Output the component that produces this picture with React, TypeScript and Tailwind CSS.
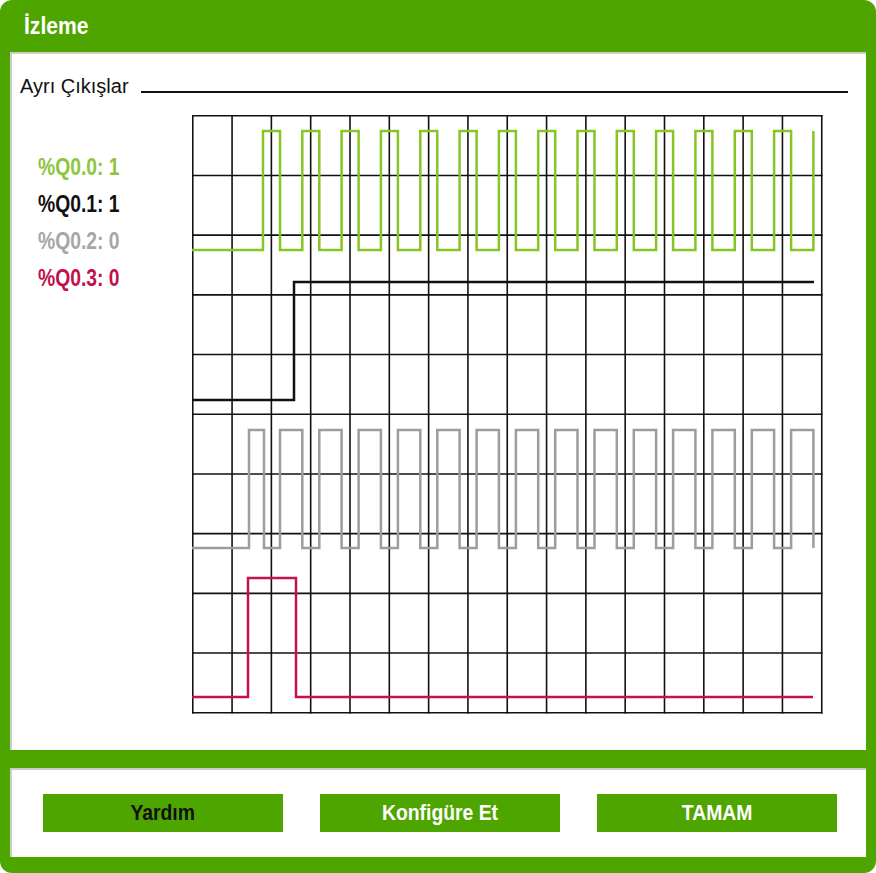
import React from 'react';

const COL = 629 / 16;
const ROW = 597 / 10;

// green pulse train, gray is roughly its inverse
function greenPath() {
  let d = 'M0 135 H71';
  for (let k = 0; k < 14; k++) {
    const r = 71 + k * COL;
    d += ` V16 H${(r + 17).toFixed(1)} V135 H${(71 + (k + 1) * COL).toFixed(1)}`;
  }
  d += ' V16';
  return d;
}

function grayPath() {
  let d = 'M0 433 H57 V315 H72 V433';
  for (let k = 0; k < 14; k++) {
    const f = 71 + k * COL + 17;
    const nextRise = 71 + (k + 1) * COL;
    d += ` H${f.toFixed(1)} V315 H${nextRise.toFixed(1)} V433`;
  }
  return d;
}

function Chart() {
  const vlines = Array.from({ length: 17 }, (_, i) => i * COL + 0.75);
  const hlines = Array.from({ length: 11 }, (_, i) => i * ROW + 0.75);
  return (
    <svg width="631" height="599" viewBox="0 0 631 599" className="block shrink-0">
      {vlines.map((x, i) => (
        <line key={'v' + i} x1={x} y1={0} x2={x} y2={598.5} stroke="#111" strokeWidth="1.6" />
      ))}
      {hlines.map((y, i) => (
        <line key={'h' + i} x1={0} y1={y} x2={630.5} y2={y} stroke="#111" strokeWidth="1.6" />
      ))}
      <path d={greenPath()} fill="none" stroke="#86c524" strokeWidth="2.5" />
      <path d="M0 285 H102 V167 H622" fill="none" stroke="#111" strokeWidth="2.5" />
      <path d={grayPath()} fill="none" stroke="#9c9ca2" strokeWidth="2.5" />
      <path d="M0 582 H56 V463 H104 V582 H621" fill="none" stroke="#c4114f" strokeWidth="2.5" />
    </svg>
  );
}

export default function App() {
  const labels = [
    { text: '%Q0.0: 1', color: 'text-[#8cc63f]' },
    { text: '%Q0.1: 1', color: 'text-[#111]' },
    { text: '%Q0.2: 0', color: 'text-[#a6a6a8]' },
    { text: '%Q0.3: 0', color: 'text-[#c1114e]' },
  ];
  return (
    <div className="w-[876px] h-[873px] bg-[#4fa500] rounded-[12px] flex flex-col px-[10px] font-['Liberation_Sans',Arial,sans-serif]">
      <div className="h-[52px] flex items-center pl-[14px] text-white font-bold text-[24px]">
        <span className="inline-block scale-x-[0.88] origin-left">İzleme</span>
      </div>
      <div className="h-[698px] bg-white border-t-2 border-l-2 border-[#c9cfc4] flex flex-col">
        <div className="flex items-end h-[45px] pl-[8px] pr-[18px]">
          <span className="text-[20px] leading-none text-[#111] pb-[3px]">Ayrı Çıkışlar</span>
          <div className="flex-1 ml-[12px] h-[2px] bg-[#111] mb-[6px]" />
        </div>
        <div className="flex mt-[16px]">
          <div className="w-[180px] pl-[26px] pt-[40px] flex flex-col gap-[13px] font-bold text-[23px] leading-[24px]">
            {labels.map(l => (
              <div key={l.text} className={l.color}>
                <span className="inline-block scale-x-[0.84] origin-left">{l.text}</span>
              </div>
            ))}
          </div>
          <Chart />
        </div>
      </div>
      <div className="h-[18px]" />
      <div className="h-[89px] bg-white border-t-2 border-l-2 border-[#c9cfc4] flex items-center pl-[31px] pb-[2px] gap-[37px]">
        {[
          { t: 'Yardım', c: 'text-[#111]' },
          { t: 'Konfigüre Et', c: 'text-white' },
          { t: 'TAMAM', c: 'text-white' },
        ].map(b => (
          <div
            key={b.t}
            className={`w-[240px] h-[38px] bg-[#4fa500] flex items-center justify-center font-bold text-[22px] ${b.c}`}
          >
            <span className="inline-block scale-x-[0.88]">{b.t}</span>
          </div>
        ))}
      </div>
    </div>
  );
}
